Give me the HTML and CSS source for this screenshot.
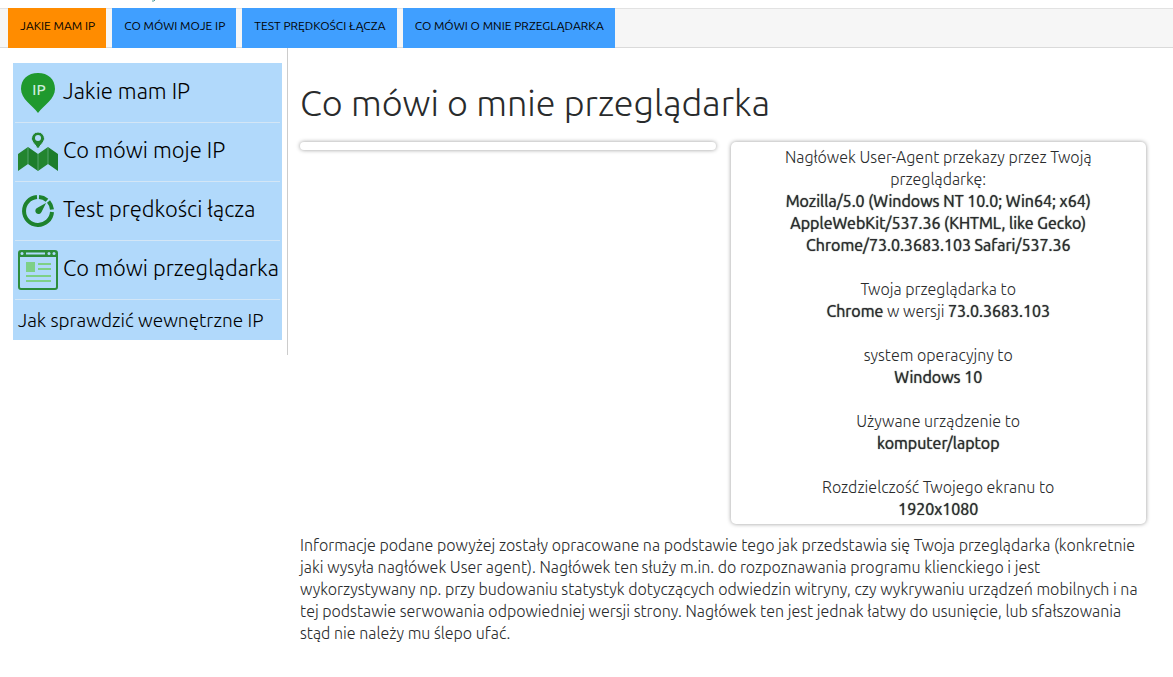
FILE: index.html
```html
<!DOCTYPE html>
<html lang="pl">
<head>
<meta charset="utf-8">
<meta name="viewport" content="width=device-width, initial-scale=1">
<title>Co mówi o mnie przeglądarka</title>
<link rel="stylesheet" href="styles.css">
</head>
<body>
<header class="brand">
  <svg class="brand-tail" viewBox="0 0 4 2" aria-hidden="true"><path d="M1 1H3L4 0" stroke="#4f9a9a" fill="none"/></svg>
</header>
<nav class="tabs">
  <a class="tab tab-active" href="#">JAKIE MAM IP</a>
  <a class="tab" href="#">CO MÓWI MOJE IP</a>
  <a class="tab" href="#">TEST PRĘDKOŚCI ŁĄCZA</a>
  <a class="tab" href="#">CO MÓWI O MNIE PRZEGLĄDARKA</a>
</nav>
<div class="layout">
  <aside class="sidebar">
    <nav class="menu">
      <a class="menu-item" href="#">
        <svg class="icon" viewBox="0 0 40 40" aria-hidden="true">
          <path d="M20 40C14 32 3 26 3 16C3 6 10 0 20 0S37 6 37 16C37 26 26 32 20 40Z" fill="#1f992e"/>
          <text class="pin-text" x="21" y="22" text-anchor="middle">IP</text>
        </svg>
        <span class="menu-label">Jakie mam IP</span>
      </a>
      <a class="menu-item" href="#">
        <svg class="icon" viewBox="0 0 40 40" aria-hidden="true">
          <path d="M0 22L10 15V32L0 39ZM20 22L30 15V32L20 39Z" fill="#23852f"/>
          <path d="M10 15L20 22V39L10 32ZM30 15L40 22V39L30 32Z" fill="#1d7d2b"/>
          <path d="M10 15V32M20 22V39M30 15V32" stroke="#6fb58a" stroke-width=".7"/>
          <path d="M20 17.500C18 13 13.500 10 13.500 6.500A6.500 6.500 0 0 1 26.500 6.500C26.500 10 22 13 20 17.500Z" fill="#23852f" stroke="#b1d9fb"/>
          <circle cx="20" cy="6" r="3" fill="#b1d9fb"/>
        </svg>
        <span class="menu-label">Co mówi moje IP</span>
      </a>
      <a class="menu-item" href="#">
        <svg class="icon" viewBox="0 0 40 40" aria-hidden="true">
          <g fill="none" stroke="#1d822d" stroke-width="4">
            <path d="M19 6A14 14 0 1 0 34 21"/>
            <path d="M21 6A14 14 0 0 1 29 9.200"/>
            <path d="M30.500 10.500A14 14 0 0 1 34 18.500"/>
          </g>
          <path d="M28 12L23.500 21A3.200 3.200 0 1 1 19 17Z" fill="#1d822d"/>
        </svg>
        <span class="menu-label">Test prędkości łącza</span>
      </a>
      <a class="menu-item" href="#">
        <svg class="icon" viewBox="0 0 40 40" aria-hidden="true">
          <rect x="1" y="1" width="38" height="38" rx="2" fill="none" stroke="#2c8d3b" stroke-width="2"/>
          <path d="M1 1H39V7H1Z" fill="#2c8d3b"/>
          <path d="M8 3.500H27" stroke="#b1d9fb" stroke-width="2"/>
          <circle cx="4" cy="3.500" r="1.500" fill="#b1d9fb"/>
          <circle cx="31" cy="3.500" r="1.500" fill="#b1d9fb"/>
          <circle cx="36" cy="3.500" r="1.500" fill="#b1d9fb"/>
          <rect x="8" y="12" width="9" height="10" fill="#7ed087"/>
          <path d="M20 14H33M20 19H33M8 26H33M8 31H33" stroke="#7ed087" stroke-width="2"/>
        </svg>
        <span class="menu-label">Co mówi przeglądarka</span>
      </a>
      <a class="menu-item menu-item-small" href="#">Jak sprawdzić wewnętrzne IP</a>
    </nav>
  </aside>
  <main class="content">
    <h1 class="title">Co mówi o mnie przeglądarka</h1>
    <div class="cards">
      <section class="card"></section>
      <section class="card card-agent">
        <p>Nagłówek User-Agent przekazy przez Twoją przeglądarkę:<br>
        <strong>Mozilla/5.0 (Windows NT 10.0; Win64; x64) AppleWebKit/537.36 (KHTML, like Gecko) Chrome/73.0.3683.103 Safari/537.36</strong></p>
        <p>Twoja przeglądarka to<br><strong>Chrome</strong> w wersji <strong>73.0.3683.103</strong></p>
        <p>system operacyjny to<br><strong>Windows 10</strong></p>
        <p>Używane urządzenie to<br><strong>komputer/laptop</strong></p>
        <p>Rozdzielczość Twojego ekranu to<br><strong>1920x1080</strong></p>
      </section>
    </div>
    <p class="note">Informacje podane powyżej zostały opracowane na podstawie tego jak przedstawia się Twoja przeglądarka (konkretnie jaki wysyła nagłówek User agent). Nagłówek ten służy m.in. do rozpoznawania programu klienckiego i jest wykorzystywany np. przy budowaniu statystyk dotyczących odwiedzin witryny, czy wykrywaniu urządzeń mobilnych i na tej podstawie serwowania odpowiedniej wersji strony. Nagłówek ten jest jednak łatwy do usunięcie, lub sfałszowania stąd nie należy mu ślepo ufać.</p>
  </main>
</div>
</body>
</html>
```
FILE: styles.css
```css
* {
  box-sizing: border-box;
}

body {
  margin: 0;
  background: #fff;
  color: #292b2c;
  font-family: Ubuntu, "Open Sans", "Noto Sans", sans-serif;
  font-size: 16px;
  font-weight: 300;
  line-height: 22px;
}

a {
  color: #000;
  text-decoration: none;
}

p {
  margin: 0;
}

strong {
  font-weight: 400;
  text-shadow: 0 0 1px currentColor;
}

.brand {
  height: 8px;
  padding-left: 151px;
}

.brand-tail {
  display: block;
  width: 4px;
  height: 2px;
}

.tabs {
  display: flex;
  gap: 6px;
  padding-left: 8px;
  background: #f6f6f6;
  box-shadow: inset 0 1px #e2e2e2, inset 0 -1px #dadada;
}

.tab {
  padding: 8px 11px 12px 12px;
  background: #409fff;
  font-size: 12px;
  font-weight: 400;
  line-height: 20px;
  white-space: nowrap;
}

.tab-active {
  background: #ff8c00;
}

.layout {
  display: flex;
  align-items: flex-start;
}

.sidebar {
  flex: none;
  width: 288px;
  padding: 15px 5px 15px 13px;
  border-right: 1px solid #ccc;
}

.menu {
  padding: 1px 2px 0;
  background: #b1d9fb;
}

.menu-item {
  display: flex;
  align-items: center;
  gap: 5px;
  height: 59px;
  padding: 0 3px;
  border-bottom: 1px solid #d3e6f6;
  font-size: 22px;
  white-space: nowrap;
}

.menu-item-small {
  height: 40px;
  padding-bottom: 1px;
  border-bottom: 0;
  font-size: 19px;
}

.menu-label {
  padding-bottom: 4px;
}

.icon {
  flex: none;
  width: 40px;
  height: 40px;
}

.pin-text {
  fill: #cdeedd;
  font-size: 15px;
  font-weight: 500;
}

.content {
  flex: 1;
  min-width: 0;
  padding: 31px 27px 24px 12px;
}

.title {
  margin: 0 0 15px;
  font-size: 36px;
  font-weight: 300;
  line-height: 48px;
}

.cards {
  display: grid;
  grid-template-columns: 1fr 1fr;
  align-items: start;
  gap: 15px;
  margin-bottom: 10px;
}

.card {
  padding: 4px 48px;
  border-radius: 5px;
  box-shadow: 0 0 4px #999;
  text-align: center;
}

.card-agent {
  display: grid;
  gap: 22px;
}
```
